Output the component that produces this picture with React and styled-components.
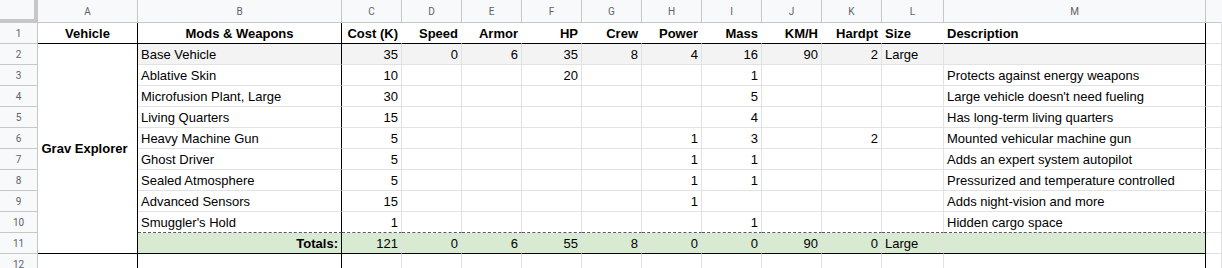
import React from 'react';
import styled, { createGlobalStyle } from 'styled-components';

const GlobalStyle = createGlobalStyle`
  * { box-sizing: border-box; }
  html, body { margin: 0; padding: 0; background: #fff; }
  body { font-family: 'Liberation Sans', Arial, sans-serif; }
`;

const columns = ['A', 'B', 'C', 'D', 'E', 'F', 'G', 'H', 'I', 'J', 'K', 'L', 'M', ''];

const headings = [
  { text: 'Vehicle', align: 'center' },
  { text: 'Mods & Weapons', align: 'center' },
  { text: 'Cost (K)' },
  { text: 'Speed' },
  { text: 'Armor' },
  { text: 'HP' },
  { text: 'Crew' },
  { text: 'Power' },
  { text: 'Mass' },
  { text: 'KM/H' },
  { text: 'Hardpt' },
  { text: 'Size', align: 'left' },
  { text: 'Description', align: 'left' },
];

// cost, speed, armor, hp, crew, power, mass, kmh, hardpt, size, description
const mods = [
  ['Base Vehicle', 35, 0, 6, 35, 8, 4, 16, 90, 2, 'Large', ''],
  ['Ablative Skin', 10, '', '', 20, '', '', 1, '', '', '', 'Protects against energy weapons'],
  ['Microfusion Plant, Large', 30, '', '', '', '', '', 5, '', '', '', "Large vehicle doesn't need fueling"],
  ['Living Quarters', 15, '', '', '', '', '', 4, '', '', '', 'Has long-term living quarters'],
  ['Heavy Machine Gun', 5, '', '', '', '', 1, 3, '', 2, '', 'Mounted vehicular machine gun'],
  ['Ghost Driver', 5, '', '', '', '', 1, 1, '', '', '', 'Adds an expert system autopilot'],
  ['Sealed Atmosphere', 5, '', '', '', '', 1, 1, '', '', '', 'Pressurized and temperature controlled'],
  ['Advanced Sensors', 15, '', '', '', '', 1, '', '', '', '', 'Adds night-vision and more'],
  ["Smuggler's Hold", 1, '', '', '', '', '', 1, '', '', '', 'Hidden cargo space'],
];

const totals = ['Totals:', 121, 0, 6, 55, 8, 0, 0, 90, 0, 'Large', ''];

const GRID = '#e2e2e2';

function alignFor(i) {
  if (i === 0 || i >= 10) return 'left';
  return 'right';
}

function Sheet() {
  const lastMod = mods.length - 1;
  return (
    <Grid>
      <Corner />
      {columns.map((c, i) => (
        <ColHead key={i} $last={i === columns.length - 1}>
          {c}
        </ColHead>
      ))}

      <RowHead>1</RowHead>
      {headings.map((h, i) => (
        <Cell
          key={i}
          $bold
          $align={h.align || 'right'}
          $bottom="black"
          $right={i === 0 || i === 1 || i === 12 ? 'black' : 'none'}
        >
          {h.text}
        </Cell>
      ))}
      <Cell />

      {mods.map((row, r) => (
        <React.Fragment key={r}>
          <RowHead>{r + 2}</RowHead>
          {r === 0 && (
            <Merged $bold $right="black" $bottom="black">
              Grav Explorer
            </Merged>
          )}
          {row.map((v, i) => (
            <Cell
              key={i}
              $align={alignFor(i)}
              $bg={r === 0 ? '#f3f3f3' : undefined}
              $bottom={r === lastMod ? 'dashed' : undefined}
              $right={i === 0 || i === 11 ? 'black' : undefined}
            >
              {v}
            </Cell>
          ))}
          <Cell />
        </React.Fragment>
      ))}

      <RowHead>11</RowHead>
      {totals.map((v, i) => (
        <Cell
          key={i}
          $align={i === 0 ? 'right' : alignFor(i)}
          $bold={i === 0}
          $bg="#d9ead3"
          $bottom="black"
          $right={i === 0 || i === 11 ? 'black' : undefined}
        >
          {v}
        </Cell>
      ))}
      <Cell />

      <RowHead>12</RowHead>
      {columns.map((c, i) => (
        <Cell key={i} $right={i === 0 || i === 1 || i === 12 ? 'black' : undefined} />
      ))}
    </Grid>
  );
}

export default function App() {
  return (
    <>
      <GlobalStyle />
      <Sheet />
    </>
  );
}

const Grid = styled.div`
  display: grid;
  grid-template-columns: 38px 100px 204px repeat(9, 60px) 62px 262px 1fr;
  grid-template-rows: 23px repeat(12, 21px);
  width: 1222px;
  height: 268px;
  overflow: hidden;
  font-size: 13px;
  color: #000;
`;

const Corner = styled.div`
  background: #f8f9fa;
  border-right: 4px solid #c7c7c7;
  border-bottom: 4px solid #c7c7c7;
`;

const ColHead = styled.div`
  display: flex;
  align-items: center;
  justify-content: center;
  background: #f8f9fa;
  border-right: 1px solid ${p => (p.$last ? '#f8f9fa' : '#c7c7c7')};
  border-bottom: 1px solid #c7c7c7;
  font-family: Roboto, 'Liberation Sans', sans-serif;
  font-size: 10px;
  color: #5f6368;
  padding-top: 1px;
`;

const RowHead = styled.div`
  display: flex;
  align-items: center;
  justify-content: center;
  background: #f8f9fa;
  border-right: 1px solid #c7c7c7;
  border-bottom: 1px solid #c7c7c7;
  font-family: Roboto, 'Liberation Sans', sans-serif;
  font-size: 10px;
  color: #5f6368;
`;

const rightColor = r => (r === 'black' ? '#000' : r === 'none' ? '#fff' : GRID);

const Cell = styled.div`
  display: flex;
  align-items: center;
  justify-content: ${p =>
    p.$align === 'right' ? 'flex-end' : p.$align === 'center' ? 'center' : 'flex-start'};
  padding: 1px 3px 0;
  white-space: nowrap;
  overflow: hidden;
  background: ${p => p.$bg || '#fff'};
  font-weight: ${p => (p.$bold ? 700 : 400)};
  border-right: 1px solid ${p => rightColor(p.$right)};
  border-bottom: 1px ${p => (p.$bottom === 'dashed' ? 'dashed #5a5a5a' : 'solid')}
    ${p => (p.$bottom === 'black' ? '#000' : p.$bottom === 'dashed' ? '' : GRID)};
`;

const Merged = styled(Cell)`
  grid-row: span 10;
  justify-content: center;
  padding: 0 6px 0 0;
`;
